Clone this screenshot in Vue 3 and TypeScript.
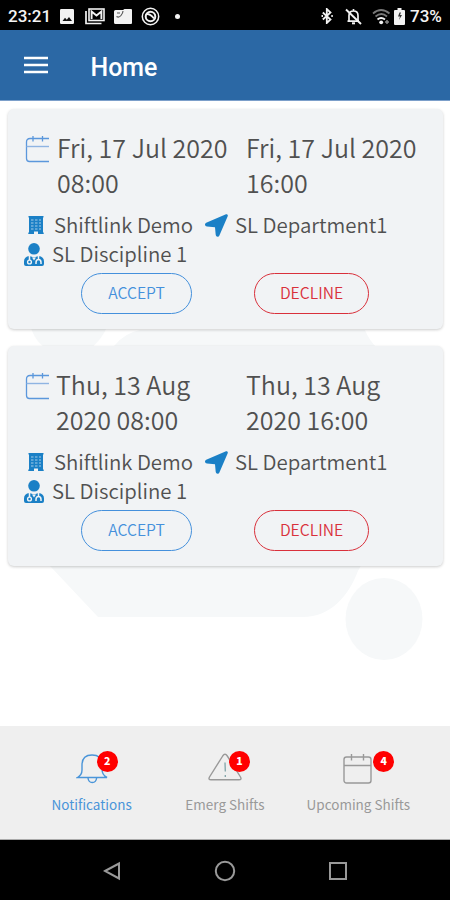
<script setup lang="ts">
interface Shift {
  id: number
  start: [string, string]
  end: [string, string]
  site: string
  department: string
  discipline: string
}

interface Tab {
  label: string
  icon: 'bell' | 'warning' | 'calendar'
  count: number
  active: boolean
}

const shifts: Shift[] = [
  {
    id: 1,
    start: ['Fri, 17 Jul 2020', '08:00'],
    end: ['Fri, 17 Jul 2020', '16:00'],
    site: 'Shiftlink Demo',
    department: 'SL Department1',
    discipline: 'SL Discipline 1',
  },
  {
    id: 2,
    start: ['Thu, 13 Aug', '2020 08:00'],
    end: ['Thu, 13 Aug', '2020 16:00'],
    site: 'Shiftlink Demo',
    department: 'SL Department1',
    discipline: 'SL Discipline 1',
  },
]

const tabs: Tab[] = [
  { label: 'Notifications', icon: 'bell', count: 2, active: true },
  { label: 'Emerg Shifts', icon: 'warning', count: 1, active: false },
  { label: 'Upcoming Shifts', icon: 'calendar', count: 4, active: false },
]
</script>

<template>
  <div class="screen">
    <div class="status">
      <span class="clock">23:21</span>
      <svg class="s-img" width="14" height="15" viewBox="0 0 14 15">
        <rect width="14" height="15" rx="1.2" fill="#f2f2f2" />
        <path d="M2.5 12 5 8.7l1.8 2L9 8l3 4z" fill="#111" />
      </svg>
      <svg class="s-mail" width="20" height="17" viewBox="0 0 20 17" fill="none" stroke="#f2f2f2">
        <path d="M1 3v12.5h15.5" stroke-width="1.7" />
        <rect x="4" y="1" width="15" height="11.5" stroke-width="1.6" />
        <path d="M6.6 11V3.6l4.9 4 4.9-4V11" stroke-width="1.9" />
      </svg>
      <svg class="s-note" width="18" height="15" viewBox="0 0 18 15">
        <path d="M1.5 1H9l1.500-1H17q1 0 1 1V14q0 1-1 1H1.5Q0 15 0 13.500V2.500Q0 1 1.500 1z" fill="#f2f2f2" />
        <path d="M2.500 7.500q2.500 1.500 4.500-1t2-4.500M3 4h3" stroke="#555" stroke-width="1.100" fill="none" />
      </svg>
      <svg class="s-ring" width="19" height="19" viewBox="0 0 19 19" fill="none" stroke="#f2f2f2">
        <circle cx="9.500" cy="9.500" r="8.200" stroke-width="1.500" />
        <circle cx="9.500" cy="9.500" r="4.800" stroke-width="2" />
        <path d="M6 7q3.500 0 7 4.500" stroke-width="1.800" />
      </svg>
      <span class="dot"></span>
      <span class="grow"></span>
      <svg class="s-bt" width="12" height="16" viewBox="0 0 12 16" fill="none" stroke="#f2f2f2" stroke-width="1.800">
        <path d="M1.800 4.500 9.500 11.500 5.800 15V1l3.700 3.500L1.800 11.500" />
        <path d="M.5 8h1.500M10.300 8h1.500" stroke-width="1.800" />
      </svg>
      <svg class="s-bell" width="17" height="17" viewBox="0 0 17 17" fill="none" stroke="#f2f2f2" stroke-width="1.700">
        <path d="M4 13V7.500Q4 3 8.500 3T13 7.500V13M2.500 13.200h11.500M8.500 1v2" />
        <path d="M7 15.300h3" stroke-width="2" />
        <path d="M1 1.500 16 16" stroke-width="1.900" />
      </svg>
      <svg class="s-wifi" width="19" height="17" viewBox="0 0 19 17" fill="none">
        <path d="M1 5.500q8-7 16.500 0M3.500 8.500q6-5 11.500 0" stroke="#777" stroke-width="1.700" />
        <path d="M5.500 11.500q3.500-2.800 7.500 0" stroke="#f2f2f2" stroke-width="2" />
        <circle cx="9.200" cy="14.300" r="1.900" fill="#f2f2f2" />
        <path d="M15 12v4M13 14h4" stroke="#888" stroke-width="1.500" />
      </svg>
      <svg class="s-bat" width="11" height="17" viewBox="0 0 11 17">
        <path d="M3.500 0h4v2H10q1 0 1 1v13q0 1-1 1H1q-1 0-1-1V3q0-1 1-1h2.500z" fill="#f2f2f2" />
        <path d="M5.500 4.500 4 8.500h2L5 12l3-5H6l1-2.500z" fill="#333" />
      </svg>
      <span class="pct">73%</span>
    </div>

    <header class="bar">
      <svg width="24" height="18" viewBox="0 0 24 18" stroke="#fff" stroke-width="2.600">
        <path d="M0 2h24M0 9h24M0 16h24" />
      </svg>
      <h1>Home</h1>
    </header>

    <main class="content">
      <svg class="backdrop" width="450" height="626" viewBox="0 100 450 626" fill="#f6f8f9">
        <path d="M30 324h78q-5 16-22 28H52Q34 343 30 324z" />
        <path d="M50 566C25 520 70 380 115 345q10-12 25-15h225q4 10 12 18v150q-3 45-19 73c-10 26-28 46-55 46H98Z" />
        <ellipse cx="384" cy="619" rx="38.500" ry="41" />
      </svg>

      <article v-for="s in shifts" :key="s.id" class="card">
        <div class="dates">
          <svg class="cal" width="25" height="28" viewBox="0 0 25 28" fill="none" stroke="#5b97dc">
            <path d="M24 3.500H5Q1.500 3.500 1.500 7v16.500q0 3 3 3H24" stroke-width="1.300" />
            <path d="M1.500 11.500H24" stroke="#8fb4e2" stroke-width="1.400" />
            <path d="M8 1v5.500M17.500 1v5.500" stroke-width="1.300" />
          </svg>
          <p class="date start" :class="{ near: s.id === 2 }"><span>{{ s.start[0] }}</span><span>{{ s.start[1] }}</span></p>
          <p class="date"><span>{{ s.end[0] }}</span><span>{{ s.end[1] }}</span></p>
        </div>
        <div class="row">
          <svg class="building" width="16" height="18" viewBox="0 0 16 18">
            <path d="M.5 0h15v1.500H15v15h.7V18H10v-2.500H6V18H.3v-1.500H1v-15H.5z" fill="#1b80c6" />
            <path d="M3 4h2.500M7 4h2.500M11 4h2M3 7h2.500M7 7h2.500M11 7h2M3 10h2.500M7 10h2.500M11 10h2M3 13h2.500M7 13h2.500M11 13h2" stroke="#a3cbe8" stroke-width="1.100" />
          </svg>
          <span class="site">{{ s.site }}</span>
          <svg class="arrow" width="23" height="23" viewBox="0 0 23 23" fill="#1b80c6">
            <path d="M21 .3 1.200 8.800c-2 .9-1.400 3.600.8 3.700l8 .8.700 7.500c.3 2.400 2.900 2.600 3.700.6L22.700 2.200c.5-1.200-.5-2.400-1.700-1.900z" />
          </svg>
          <span class="dept">{{ s.department }}</span>
        </div>
        <div class="row">
          <svg class="doctor" width="20" height="23" viewBox="0 0 20 23">
            <circle cx="10" cy="5.800" r="5.800" fill="#1b80c6" />
            <path d="M5.500 13 10 14.500l4.500-1.500Q20 13.500 20 18.500V21q0 2-2 2H2q-2 0-2-2v-2.500q0-5 5.500-5.500z" fill="#1b80c6" />
            <path d="M5.500 13v4M14.500 13v3.500M12 21v-1.500q0-3 2.500-3t2.500 3V21" fill="none" stroke="#f1f3f5" stroke-width="1.500" />
            <circle cx="5.500" cy="19" r="1.900" fill="none" stroke="#f1f3f5" stroke-width="1.400" />
            <path d="m8 14.500 2 3 2-3z" fill="#f1f3f5" />
          </svg>
          <span class="disc">{{ s.discipline }}</span>
        </div>
        <div class="actions">
          <button class="pill accept">ACCEPT</button>
          <button class="pill decline">DECLINE</button>
        </div>
      </article>
    </main>

    <nav class="tabs">
      <div v-for="t in tabs" :key="t.label" class="tab" :class="[t.icon, { active: t.active }]">
        <div class="glyph">
          <svg v-if="t.icon === 'bell'" width="32" height="32" viewBox="0 0 32 32" fill="none" stroke="currentColor" stroke-width="1.400">
            <path d="M1.500 25.500H31Q26 23 26 17v-4Q26 3 16 3T6 13v5q0 5-4.500 7.500z" />
            <path d="M12 26q.5 4.500 4.300 4.500t4.300-4.500" />
          </svg>
          <svg v-else-if="t.icon === 'warning'" width="34" height="32" viewBox="0 0 34 32" fill="none" stroke="currentColor" stroke-width="1.400">
            <path d="M14.700 4q2.300-3.500 4.600 0L32.500 25q1.500 2.800-1.500 2.800H3Q0 27.800 1.500 25z" />
            <path d="m17 10.500.3 9M17.300 23v2" stroke="#7fa3a8" stroke-width="1.300" />
          </svg>
          <svg v-else width="30" height="32" viewBox="0 0 30 32" fill="none" stroke="currentColor" stroke-width="1.400">
            <rect x="1" y="5" width="27" height="26" rx="2.500" />
            <path d="M1 13.500h27M8.500 2v6.500M20.500 2v6.500" />
          </svg>
          <span class="badge">{{ t.count }}</span>
        </div>
        <span class="label">{{ t.label }}</span>
      </div>
    </nav>

    <footer class="sysnav">
      <svg width="18" height="20" viewBox="0 0 18 20"><path d="M2 10 16 2.500v15z" /></svg>
      <svg width="22" height="22" viewBox="0 0 22 22"><circle cx="11" cy="11" r="9.200" /></svg>
      <svg width="18" height="18" viewBox="0 0 18 18"><rect x="1" y="1" width="16" height="16" /></svg>
    </footer>
  </div>
</template>

<style>
body {
  margin: 0;
}
</style>

<style scoped>
.screen {
  width: 450px;
  height: 900px;
  display: flex;
  flex-direction: column;
  overflow: hidden;
  background: #fff;
  font-family: "Noto Sans CJK SC", "Open Sans", sans-serif;
}
svg {
  display: block;
  flex: none;
}
.status {
  height: 30px;
  box-sizing: border-box;
  padding: 2px 8px 0;
  display: flex;
  align-items: center;
  background: #000;
  color: #f4f4f4;
  font: 500 17px Roboto, sans-serif;
  white-space: nowrap;
}
.clock { width: 43px; }
.s-img { margin-left: 9px; }
.s-mail { margin-left: 11px; }
.s-note { margin-left: 9px; }
.s-ring { margin-left: 9px; }
.dot {
  width: 5px;
  height: 5px;
  margin-left: 15px;
  border-radius: 50%;
  background: #f4f4f4;
}
.grow { flex: 1; }
.s-bell { margin-left: 12px; }
.s-wifi { margin-left: 10px; }
.s-bat { margin-left: 3px; }
.pct {
  width: 32px;
  margin-left: 5px;
}
.bar {
  height: 71px;
  box-sizing: border-box;
  padding: 0 0 0 23.500px;
  display: flex;
  align-items: center;
  background: #2b68a5;
  border-bottom: 1px solid #7c9fca;
}
.bar h1 {
  margin: 4px 0 0 43px;
  color: #fff;
  font: 500 24.900px Roboto, sans-serif;
}
.content {
  position: relative;
  height: 625px;
  box-sizing: border-box;
  padding: 8px 7px 0 8px;
  display: flex;
  flex-direction: column;
  gap: 17px;
}
.backdrop {
  position: absolute;
  top: -1px;
  left: 0;
}
.card {
  position: relative;
  height: 220px;
  box-sizing: border-box;
  padding-top: 21px;
  border-radius: 6px;
  background: #f1f3f5;
  box-shadow: 0 1px 3px rgba(0, 0, 0, 0.2);
  color: #505050;
  font-weight: 350;
  white-space: nowrap;
}
.dates {
  height: 80px;
  display: flex;
}
.cal { margin: 5px 0 0 17px; }
.date {
  width: 189px;
  margin: 0;
  font-size: 25px;
  line-height: 35px;
}
.date span { display: block; }
.date.start { margin-left: 7px; }
.date.start.near {
  width: 190px;
  margin-left: 6px;
}
.row {
  height: 29px;
  display: flex;
  align-items: center;
  font-size: 20.400px;
  line-height: 29px;
}
.building { margin: 1px 0 0 20px; }
.site {
  width: 139px;
  margin-left: 10px;
}
.arrow { margin: 2px 0 0 12px; }
.dept { margin-left: 7px; }
.doctor { margin: 2px 0 0 16px; }
.disc { margin-left: 8px; }
.actions {
  display: flex;
  gap: 62px;
  padding: 5px 0 0 73px;
}
.pill {
  width: 111px;
  height: 41px;
  padding: 0 0 2px;
  border: 1.500px solid currentColor;
  border-radius: 21px;
  background: none;
  font: 350 15.700px/36px "Noto Sans CJK SC", sans-serif;
}
.accept { color: #4490dc; }
.decline {
  width: 115px;
  color: #d9303b;
}
.tabs {
  height: 114px;
  display: flex;
  padding: 0 25px;
  box-sizing: border-box;
  background: #efefef;
  border-bottom: 1px solid #aaa;
}
.tab {
  flex: 1;
  display: flex;
  flex-direction: column;
  align-items: center;
  color: #999;
}
.tab.active { color: #4a95d9; }
.glyph {
  position: relative;
  height: 32px;
  margin-top: 26px;
}
.badge {
  position: absolute;
  top: -1.500px;
  left: 21px;
  width: 21px;
  height: 21px;
  border-radius: 50%;
  background: #f00;
  color: #fff;
  font: 900 10.500px/20px "Noto Sans CJK SC", sans-serif;
  text-align: center;
}
.calendar .badge { left: 30px; }
.label {
  margin-top: 10px;
  font-size: 13.500px;
  line-height: 20px;
  white-space: nowrap;
}
.sysnav {
  height: 60px;
  box-sizing: border-box;
  padding: 1px 103px 0 103px;
  display: flex;
  align-items: center;
  justify-content: space-between;
  background: #000;
}
.sysnav svg {
  fill: none;
  stroke: #999;
  stroke-width: 2;
}
</style>
